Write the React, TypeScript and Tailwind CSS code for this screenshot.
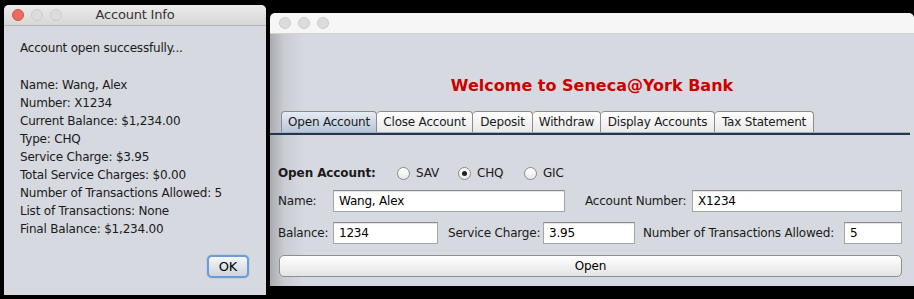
import React from "react";

const font = "font-['DejaVu_Sans','Liberation_Sans',sans-serif]";

const infoLines = [
  "Name: Wang, Alex",
  "Number: X1234",
  "Current Balance: $1,234.00",
  "Type: CHQ",
  "Service Charge: $3.95",
  "Total Service Charges: $0.00",
  "Number of Transactions Allowed: 5",
  "List of Transactions: None",
  "Final Balance: $1,234.00",
];

const tabs = [
  { label: "Open Account", w: "w-[96px]", active: true },
  { label: "Close Account", w: "w-[96px]" },
  { label: "Deposit", w: "w-[60px]" },
  { label: "Withdraw", w: "w-[68px]" },
  { label: "Display Accounts", w: "w-[114px]" },
  { label: "Tax Statement", w: "w-[99px]" },
];

function Lights({ active }: { active?: boolean }) {
  return (
    <div className="flex items-center gap-[7px]">
      <span
        className={
          active
            ? "w-[12px] h-[12px] rounded-full bg-[#ec6a5e] border border-[#d25449]"
            : "w-[12px] h-[12px] rounded-full bg-[#dcdcdc] border border-[#cbcbcb]"
        }
      />
      <span className="w-[12px] h-[12px] rounded-full bg-[#dcdcdc] border border-[#cbcbcb]" />
      <span className="w-[12px] h-[12px] rounded-full bg-[#dcdcdc] border border-[#cbcbcb]" />
    </div>
  );
}

function Field({ value, w }: { value: string; w: string }) {
  return (
    <div
      className={`${w} h-[22px] shrink-0 bg-white border border-[#a6a6a6] border-t-[#8c8c8c] shadow-[inset_0_1px_1px_rgba(0,0,0,0.12)] flex items-center px-[5px] text-black`}
    >
      {value}
    </div>
  );
}

function Radio({ label, checked, w }: { label: string; checked?: boolean; w: string }) {
  return (
    <div className={`${w} flex items-center`}>
      <span className="w-[13px] h-[13px] rounded-full border border-[#8a8a8a] bg-gradient-to-b from-white to-[#e9e9e9] flex items-center justify-center">
        {checked && <span className="w-[5px] h-[5px] rounded-full bg-[#222]" />}
      </span>
      <span className="ml-[6px]">{label}</span>
    </div>
  );
}

export default function App() {
  return (
    <div className={`w-[914px] h-[299px] bg-black flex items-start gap-[4px] pl-[4px] overflow-hidden text-[12px] tracking-[-0.2px] whitespace-nowrap text-[#1a1a1a] ${font}`}>
      {/* Account Info dialog */}
      <div className="mt-[5px] w-[262px] h-[290px] flex flex-col rounded-t-[5px] overflow-hidden bg-[#d6d9df]">
        <div className="h-[21px] shrink-0 bg-gradient-to-b from-[#ebebeb] to-[#d7d7d7] border-b border-[#b4b4b4] flex items-center px-[8px]">
          <Lights active />
          <span className="flex-1 text-center text-[13px] text-[#333] pr-[50px]">Account Info</span>
        </div>
        <div className="flex-1 flex flex-col pl-[16px] pr-[17px] pt-[13px] pb-[17px]">
          <div className="leading-[18px]">Account open successfully...</div>
          <div className="mt-[19px] leading-[18px]">
            {infoLines.map((l) => (
              <div key={l}>{l}</div>
            ))}
          </div>
          <div className="mt-auto flex justify-end">
            <button className="w-[42px] h-[23px] rounded-[5px] border-2 border-[#6d9bd3] bg-gradient-to-b from-[#f4f6f9] to-[#cdd5df] text-[13px] text-black shadow-[0_0_1px_#3b6db0]">
              OK
            </button>
          </div>
        </div>
      </div>

      {/* Main bank window */}
      <div className="mt-[13px] w-[644px] h-[273px] flex flex-col rounded-t-[5px] overflow-hidden">
        <div className="h-[21px] shrink-0 bg-[#f6f6f6] border-b border-[#d2d2d2] flex items-center px-[9px]">
          <Lights />
        </div>
        <div className="flex-1 flex flex-col bg-[linear-gradient(to_right,#a9abb0,#c9ccd2_14px,#d6d9df_34px)]">
          <div className="pt-[42px] h-[62px] text-center text-[16px] tracking-normal font-bold text-[#cc0000] leading-[20px]">
            Welcome to Seneca@York Bank
          </div>
          <div className="mt-[15px] pl-[11px] flex items-end h-[21px]">
            {tabs.map((t) => (
              <div
                key={t.label}
                className={
                  t.active
                    ? `${t.w} h-[21px] flex items-center justify-center rounded-t-[4px] border border-b-0 border-[#8c8c8c] bg-gradient-to-b from-[#e6ecf3] to-[#b7c6d8]`
                    : `${t.w} h-[21px] flex items-center justify-center rounded-t-[4px] border border-b-0 border-l-0 border-[#8c8c8c] bg-gradient-to-b from-white to-[#e9e9e9]`
                }
              >
                {t.label}
              </div>
            ))}
          </div>
          <div className="mr-[4px] h-[3px] border-t border-[#9fb1c8] bg-[#c9d3df] border-b-2 border-b-[#27354a]" />

          <div className="pl-[8px] pr-[12px] flex flex-col">
            <div className="mt-[28px] h-[20px] flex items-center">
              <div className="w-[119px] font-bold tracking-[-0.1px]">Open Account:</div>
              <Radio label="SAV" w="w-[61px]" />
              <Radio label="CHQ" checked w="w-[66px]" />
              <Radio label="GIC" w="w-[60px]" />
            </div>

            <div className="mt-[7px] flex items-center">
              <div className="w-[55px]">Name:</div>
              <Field value="Wang, Alex" w="w-[232px]" />
              <div className="w-[127px] pl-[20px]">Account Number:</div>
              <Field value="X1234" w="w-[210px]" />
            </div>

            <div className="mt-[10px] flex items-center">
              <div className="w-[55px]">Balance:</div>
              <Field value="1234" w="w-[105px]" />
              <div className="w-[105px] pl-[10px]">Service Charge:</div>
              <Field value="3.95" w="w-[92px]" />
              <div className="w-[209px] pl-[8px]">Number of Transactions Allowed:</div>
              <Field value="5" w="w-[58px]" />
            </div>

            <button className="mt-[11px] ml-px w-[623px] h-[22px] rounded-[5px] border border-[#8e8e8e] bg-gradient-to-b from-white to-[#e4e4e4] text-black">
              Open
            </button>
          </div>
        </div>
      </div>
    </div>
  );
}
